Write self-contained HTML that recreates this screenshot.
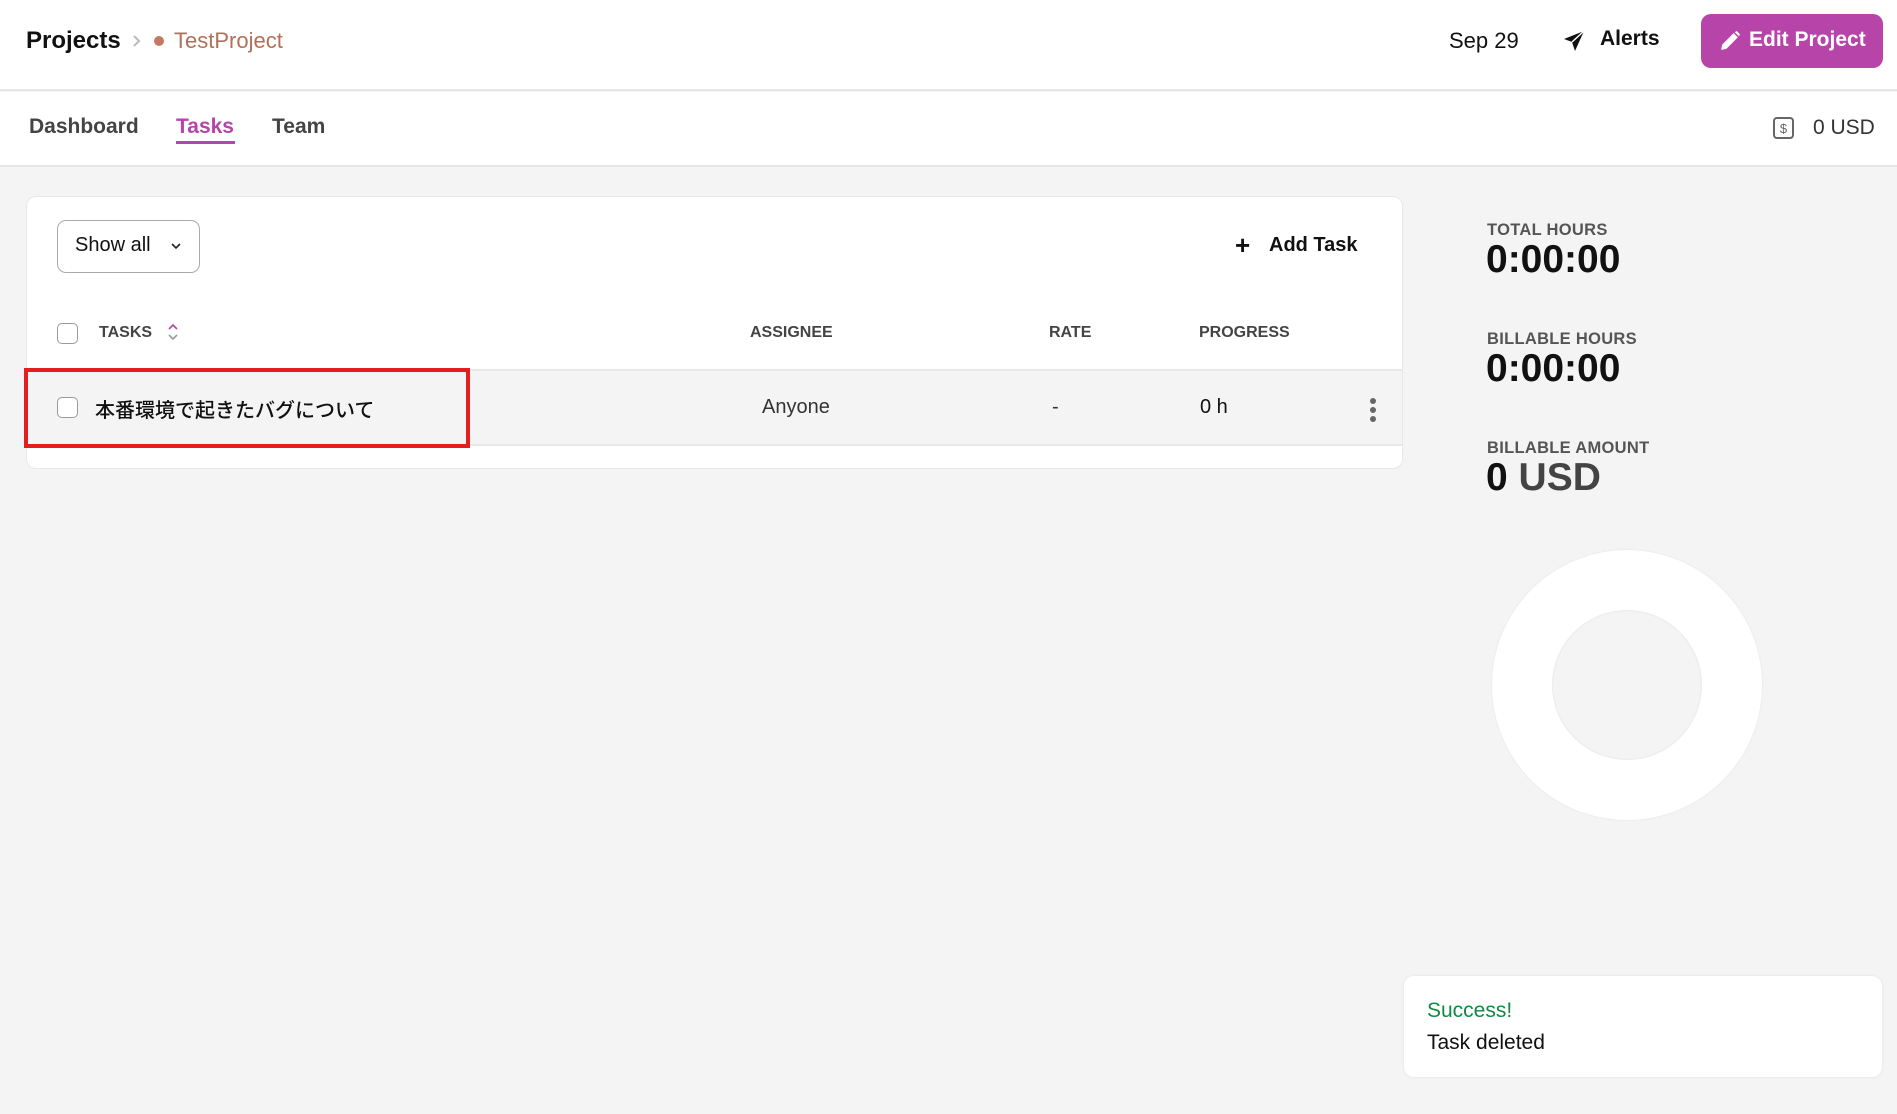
<!DOCTYPE html>
<html><head><meta charset="utf-8">
<style>
*{margin:0;padding:0;box-sizing:border-box}
html,body{width:1897px;height:1114px;overflow:hidden;background:#f4f4f4;font-family:"Liberation Sans","Noto Sans CJK JP",sans-serif;color:#111}
.a{position:absolute;white-space:nowrap}
.top{position:absolute;left:0;top:0;width:1897px;height:91px;background:#fff;border-bottom:2px solid #e6e6e6}
.nav{position:absolute;left:0;top:92px;width:1897px;height:75px;background:#fff;border-bottom:2px solid #e6e6e6}
.card{position:absolute;left:26px;top:196px;width:1377px;height:273px;background:#fff;border:1px solid #e8e8e8;border-radius:10px;overflow:hidden}
.cb{position:absolute;width:21px;height:21px;border:1.5px solid #9a9a9a;border-radius:5px;background:#fff}
.th{font-size:16px;font-weight:bold;color:#444}
.lbl{font-size:16.5px;font-weight:bold;color:#555;letter-spacing:.3px}
.val{font-size:39px;font-weight:bold;color:#111}
</style></head><body>
<div class="top"></div>
<div class="a" style="left:26px;top:27px;font-size:24px;font-weight:bold">Projects</div>
<svg class="a" style="left:131px;top:34px" width="10" height="14" viewBox="0 0 10 14"><path d="M3 2l5 5-5 5" stroke="#bbb" stroke-width="2" fill="none"/></svg>
<div class="a" style="left:154px;top:36px;width:10px;height:10px;border-radius:50%;background:#c47a62"></div>
<div class="a" style="left:174px;top:28px;font-size:22px;color:#b0705a">TestProject</div>
<div class="a" style="left:1449px;top:28px;font-size:22px">Sep 29</div>
<svg class="a" style="left:1563px;top:30px" width="22" height="22" viewBox="0 0 22 22"><path d="M21 1L1 9l8 3 3 9z" fill="#111"/><path d="M21 1L9 12" stroke="#fff" stroke-width="1.5"/></svg>
<div class="a" style="left:1600px;top:27px;font-size:21px;font-weight:bold">Alerts</div>
<div class="a" style="left:1701px;top:14px;width:182px;height:54px;border-radius:10px;background:#b644a9"></div>
<svg class="a" style="left:1719px;top:30px" width="22" height="22" viewBox="0 0 21 21"><path d="M2 19l1-5L14 3l4 4L7 18z" fill="#fff"/><path d="M15 2l2-1 3 3-1 2z" fill="#fff"/></svg>
<div class="a" style="left:1749px;top:28px;font-size:21px;font-weight:bold;color:#fff">Edit Project</div>

<div class="nav"></div>
<div class="a" style="left:29px;top:115px;font-size:21px;color:#444;font-weight:bold">Dashboard</div>
<div class="a" style="left:176px;top:115px;font-size:21px;color:#b644a9;font-weight:bold">Tasks</div>
<div class="a" style="left:176px;top:141px;width:59px;height:3px;background:#b644a9"></div>
<div class="a" style="left:272px;top:115px;font-size:21px;color:#444;font-weight:bold">Team</div>
<svg class="a" style="left:1773px;top:117px" width="21" height="22" viewBox="0 0 21 22"><rect x="1" y="1" width="19" height="20" rx="3" fill="none" stroke="#666" stroke-width="2"/><text x="10.5" y="16" font-size="13" text-anchor="middle" fill="#666" font-family="Liberation Sans">$</text></svg>
<div class="a" style="left:1813px;top:116px;font-size:21px;color:#333">0 USD</div>

<div class="card">
  <div class="a" style="left:30px;top:23px;width:143px;height:53px;border:1.5px solid #aaa;border-radius:9px"></div>
  <div class="a" style="left:48px;top:37px;font-size:20px">Show all</div>
  <svg class="a" style="left:143px;top:45px" width="12" height="8" viewBox="0 0 12 8"><path d="M2 2l4 4 4-4" stroke="#222" stroke-width="1.6" fill="none"/></svg>
  <div class="a" style="left:1208px;top:33px;font-size:26px;font-weight:bold">+</div>
  <div class="a" style="left:1242px;top:37px;font-size:20px;font-weight:bold">Add Task</div>
  <div class="cb" style="left:30px;top:126px"></div>
  <div class="a th" style="left:72px;top:127px">TASKS</div>
  <svg class="a" style="left:139px;top:124px" width="14" height="22" viewBox="0 0 14 22"><path d="M3 8l4-4 4 4" stroke="#b644a9" stroke-width="1.6" fill="none"/><path d="M3 14l4 4 4-4" stroke="#999" stroke-width="1.6" fill="none"/></svg>
  <div class="a th" style="left:723px;top:127px">ASSIGNEE</div>
  <div class="a th" style="left:1022px;top:127px">RATE</div>
  <div class="a th" style="left:1172px;top:127px">PROGRESS</div>
  <div class="a" style="left:0;top:172px;width:1377px;height:77px;background:#f4f4f4;border-top:2px solid #e8e8e8;border-bottom:2px solid #e8e8e8"></div>
  <div class="cb" style="left:30px;top:200px"></div>
  <div class="a" style="left:68px;top:197px;font-size:20px;font-weight:500">本番環境で起きたバグについて</div>
  <div class="a" style="left:735px;top:199px;font-size:20px;color:#333">Anyone</div>
  <div class="a" style="left:1025px;top:199px;font-size:20px;color:#333">-</div>
  <div class="a" style="left:1173px;top:199px;font-size:20px">0 h</div>
  <div class="a" style="left:1343px;top:201px;width:6px;height:6px;border-radius:50%;background:#666"></div>
  <div class="a" style="left:1343px;top:210px;width:6px;height:6px;border-radius:50%;background:#666"></div>
  <div class="a" style="left:1343px;top:219px;width:6px;height:6px;border-radius:50%;background:#666"></div>
</div>
<div class="a" style="left:24px;top:368px;width:446px;height:80px;border:4px solid #e41e1e"></div>

<div class="a lbl" style="left:1487px;top:221px">TOTAL HOURS</div>
<div class="a val" style="left:1486px;top:238px">0:00:00</div>
<div class="a lbl" style="left:1487px;top:330px">BILLABLE HOURS</div>
<div class="a val" style="left:1486px;top:347px">0:00:00</div>
<div class="a lbl" style="left:1487px;top:439px">BILLABLE AMOUNT</div>
<div class="a val" style="left:1486px;top:456px">0 <span style="color:#444">USD</span></div>

<div class="a" style="left:1492px;top:550px;width:270px;height:270px;border-radius:50%;background:#fff;box-shadow:0 0 2px rgba(0,0,0,.08)"></div>
<div class="a" style="left:1552px;top:610px;width:150px;height:150px;border-radius:50%;background:#f4f4f4;box-shadow:inset 0 0 2px rgba(0,0,0,.1)"></div>

<div class="a" style="left:1404px;top:976px;width:478px;height:101px;background:#fff;border-radius:10px;box-shadow:0 0 3px rgba(0,0,0,.08)"></div>
<div class="a" style="left:1427px;top:999px;font-size:21px;color:#118a44">Success!</div>
<div class="a" style="left:1427px;top:1031px;font-size:21px">Task deleted</div>
</body></html>
